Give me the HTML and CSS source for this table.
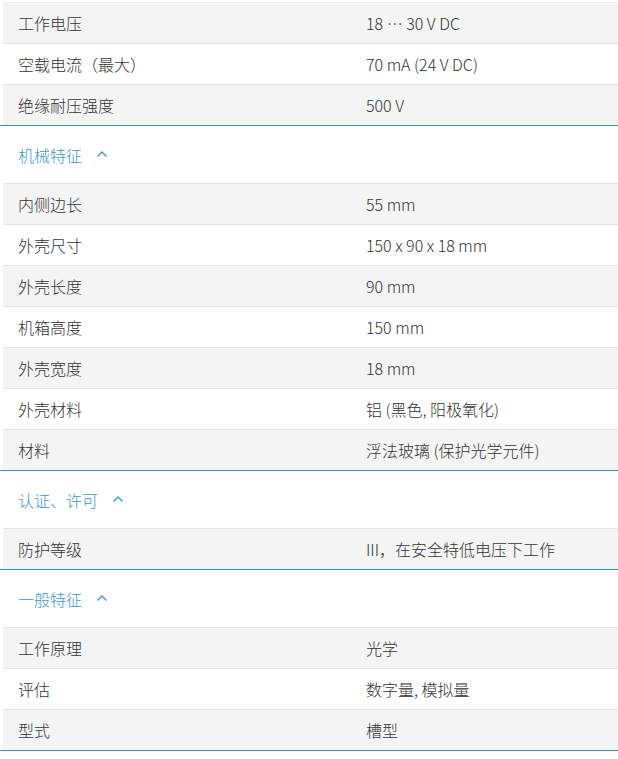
FILE: index.html
```html
<!DOCTYPE html>
<html lang="zh">
<head>
<meta charset="utf-8">
<link rel="stylesheet" href="styles.css">
</head>
<body>
<div class="specs">
  <section class="group first">
    <div class="row"><span class="k">工作电压</span><span class="v">18 ⋯ 30 V DC</span></div>
    <div class="row"><span class="k">空载电流（最大）</span><span class="v">70 mA (24 V DC)</span></div>
    <div class="row"><span class="k">绝缘耐压强度</span><span class="v">500 V</span></div>
  </section>
  <section class="group">
    <h3 class="head">机械特征<svg class="chev" viewBox="0 0 12 8" width="12" height="8"><path d="M1.5 6.5 L6 2 L10.5 6.5" fill="none" stroke="#3a9ad0" stroke-width="1.4"/></svg></h3>
    <div class="row"><span class="k">内侧边长</span><span class="v">55 mm</span></div>
    <div class="row"><span class="k">外壳尺寸</span><span class="v">150 x 90 x 18 mm</span></div>
    <div class="row"><span class="k">外壳长度</span><span class="v">90 mm</span></div>
    <div class="row"><span class="k">机箱高度</span><span class="v">150 mm</span></div>
    <div class="row"><span class="k">外壳宽度</span><span class="v">18 mm</span></div>
    <div class="row"><span class="k">外壳材料</span><span class="v">铝 (黑色, 阳极氧化)</span></div>
    <div class="row"><span class="k">材料</span><span class="v">浮法玻璃 (保护光学元件)</span></div>
  </section>
  <section class="group">
    <h3 class="head">认证、许可<svg class="chev" viewBox="0 0 12 8" width="12" height="8"><path d="M1.5 6.5 L6 2 L10.5 6.5" fill="none" stroke="#3a9ad0" stroke-width="1.4"/></svg></h3>
    <div class="row"><span class="k">防护等级</span><span class="v">III，在安全特低电压下工作</span></div>
  </section>
  <section class="group">
    <h3 class="head">一般特征<svg class="chev" viewBox="0 0 12 8" width="12" height="8"><path d="M1.5 6.5 L6 2 L10.5 6.5" fill="none" stroke="#3a9ad0" stroke-width="1.4"/></svg></h3>
    <div class="row"><span class="k">工作原理</span><span class="v">光学</span></div>
    <div class="row"><span class="k">评估</span><span class="v">数字量, 模拟量</span></div>
    <div class="row"><span class="k">型式</span><span class="v">槽型</span></div>
  </section>
</div>
</body>
</html>
```

FILE: styles.css
```css
html, body {
  margin: 0;
  padding: 0;
  background: #ffffff;
}
body {
  font-family: "Noto Sans CJK SC", "Noto Sans", sans-serif;
  font-size: 16px;
  font-weight: 300;
  color: #333333;
}
.specs {
  padding-top: 2px;
}
.group {
  display: flex;
  flex-direction: column;
  border-bottom: 1px solid #2b98c9;
}
.head {
  margin: 0 0 0 3px;
  height: 57px;
  display: flex;
  align-items: center;
  padding-left: 15px;
  font-size: 16px;
  font-weight: 300;
  color: #3a9ad0;
  border-bottom: 1px solid #e1e1e1;
}
.chev {
  margin-left: 14px;
  margin-top: -2px;
}
.group.first .row:first-child {
  border-top: 1px solid #ececec;
}
.row {
  margin-left: 3px;
  height: 40px;
  display: grid;
  grid-template-columns: 348px 1fr;
  align-items: center;
  padding-left: 15px;
  border-bottom: 1px solid #e1e1e1;
  line-height: 1;
}
.row:nth-of-type(odd) {
  background: #f4f4f4;
}
.row:last-child {
  border-bottom: none;
}
.k, .v {
  white-space: nowrap;
}
```
